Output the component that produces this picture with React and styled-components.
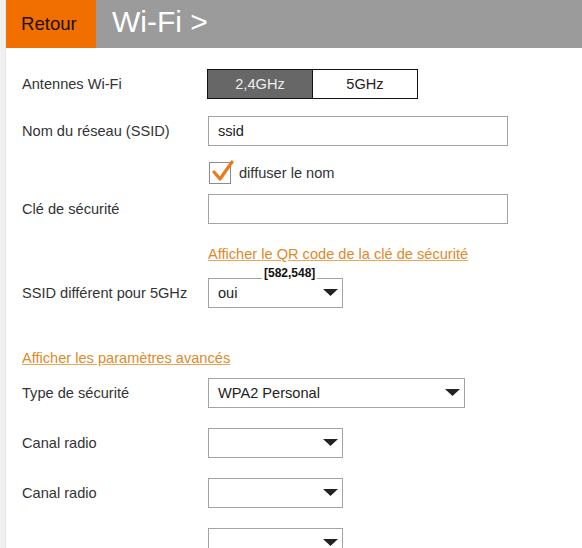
import React from "react";
import styled, { createGlobalStyle } from "styled-components";

const Global = createGlobalStyle`
  html, body { margin: 0; padding: 0; background: #fff; }
  body { font-family: "Liberation Sans", Arial, sans-serif; color: #333; overflow: hidden; }
  * { box-sizing: border-box; }
`;

const Page = styled.div`
  display: flex;
  width: 582px;
  height: 548px;
  overflow: hidden;
`;

const Gutter = styled.div`
  width: 6px;
  flex: none;
  background: #f0f0f0;
  border-right: 1px solid #e6e6e6;
`;

const Main = styled.div`
  flex: 1;
  display: flex;
  flex-direction: column;
  position: relative;
  min-height: 0;
`;

const Header = styled.header`
  display: flex;
  flex: none;
  height: 48px;
  background: #9b9b9b;
`;

const BackButton = styled.div`
  width: 90px;
  background: #f16e00;
  display: flex;
  align-items: center;
  padding-left: 15px;
  font-size: 18.6px;
  color: #1c1208;
`;

const Title = styled.h1`
  margin: 0;
  padding-left: 16px;
  display: flex;
  align-items: center;
  font-size: 30px;
  font-weight: normal;
  color: #fff;
  padding-bottom: 5px;
`;

const Form = styled.div`
  display: flex;
  flex-direction: column;
  padding-left: 16px;
`;

const Row = styled.div`
  display: flex;
  flex: none;
  align-items: center;
  height: ${(p) => p.$h || 30}px;
  margin-top: ${(p) => p.$top}px;
`;

const Label = styled.div`
  width: 186px;
  flex: none;
  font-size: 14.6px;
  color: #333;
`;

const Toggle = styled.div`
  display: flex;
  width: 211px;
  height: 30px;
  border: 1px solid #111;
  margin-left: -1px;
`;

const Seg = styled.div`
  flex: 1;
  display: flex;
  align-items: center;
  justify-content: center;
  font-size: 14.6px;
  background: ${(p) => (p.$active ? "#676767" : "#fff")};
  color: ${(p) => (p.$active ? "#eee" : "#222")};
  border-right: ${(p) => (p.$active ? "1px solid #111" : "none")};
`;

const Input = styled.div`
  width: ${(p) => p.$w}px;
  height: 30px;
  border: 1px solid #a3a3a3;
  padding-left: 9px;
  display: flex;
  align-items: center;
  font-size: 14.6px;
  color: #222;
`;

const Select = styled(Input)`
  justify-content: space-between;
  padding-right: 4px;
`;

const Arrow = () => (
  <svg width="15" height="8" viewBox="0 0 15 8">
    <polygon points="0,0 15,0 7.5,7" fill="#222" />
  </svg>
);

const CheckWrap = styled.div`
  display: flex;
  align-items: center;
  gap: 8px;
  font-size: 14.6px;
  color: #333;
  margin-left: 1px;
`;

const Box = styled.div`
  width: 22px;
  height: 22px;
  border: 1px solid #8c8c8c;
  position: relative;
`;

const Link = styled.a`
  font-size: 14.6px;
  color: #e0892a;
  text-decoration: underline;
  text-decoration-color: #e9a659;
  cursor: pointer;
`;

const Size = styled.div`
  position: absolute;
  left: 256px;
  top: 267px;
  font-size: 12px;
  font-weight: bold;
  color: #111;
  background: #fff;
  padding: 0 2px;
  line-height: 13px;
`;

const Spacer = styled.div`
  width: 186px;
  flex: none;
`;

export default function App() {
  return (
    <>
      <Global />
      <Page>
        <Gutter />
        <Main>
          <Header>
            <BackButton>Retour</BackButton>
            <Title>Wi-Fi &gt;</Title>
          </Header>
          <Form>
            <Row $top={21}>
              <Label>Antennes Wi-Fi</Label>
              <Toggle>
                <Seg $active>2,4GHz</Seg>
                <Seg>5GHz</Seg>
              </Toggle>
            </Row>
            <Row $top={17}>
              <Label>Nom du réseau (SSID)</Label>
              <Input $w={300}>ssid</Input>
            </Row>
            <Row $top={16} $h={22}>
              <Spacer />
              <CheckWrap>
                <Box>
                  <svg width="26" height="26" viewBox="0 0 26 26" style={{ position: "absolute", left: 0, top: -6 }}>
                    <path d="M4 15 L10 22 L22 5" fill="none" stroke="#ea7a1c" strokeWidth="3.2" strokeLinecap="round" strokeLinejoin="round" />
                  </svg>
                </Box>
                diffuser le nom
              </CheckWrap>
            </Row>
            <Row $top={10}>
              <Label>Clé de sécurité</Label>
              <Input $w={300} />
            </Row>
            <Row $top={22} $h={16}>
              <Spacer />
              <Link>Afficher le QR code de la clé de sécurité</Link>
            </Row>
            <Row $top={16}>
              <Label>SSID différent pour 5GHz</Label>
              <Select $w={135}>
                oui
                <Arrow />
              </Select>
            </Row>
            <Row $top={42} $h={16}>
              <Link>Afficher les paramètres avancés</Link>
            </Row>
            <Row $top={12}>
              <Label>Type de sécurité</Label>
              <Select $w={257}>
                WPA2 Personal
                <Arrow />
              </Select>
            </Row>
            <Row $top={20}>
              <Label>Canal radio</Label>
              <Select $w={135}>
                <span />
                <Arrow />
              </Select>
            </Row>
            <Row $top={20}>
              <Label>Canal radio</Label>
              <Select $w={135}>
                <span />
                <Arrow />
              </Select>
            </Row>
            <Row $top={20}>
              <Spacer />
              <Select $w={135}>
                <span />
                <Arrow />
              </Select>
            </Row>
          </Form>
          <Size>[582,548]</Size>
        </Main>
      </Page>
    </>
  );
}
